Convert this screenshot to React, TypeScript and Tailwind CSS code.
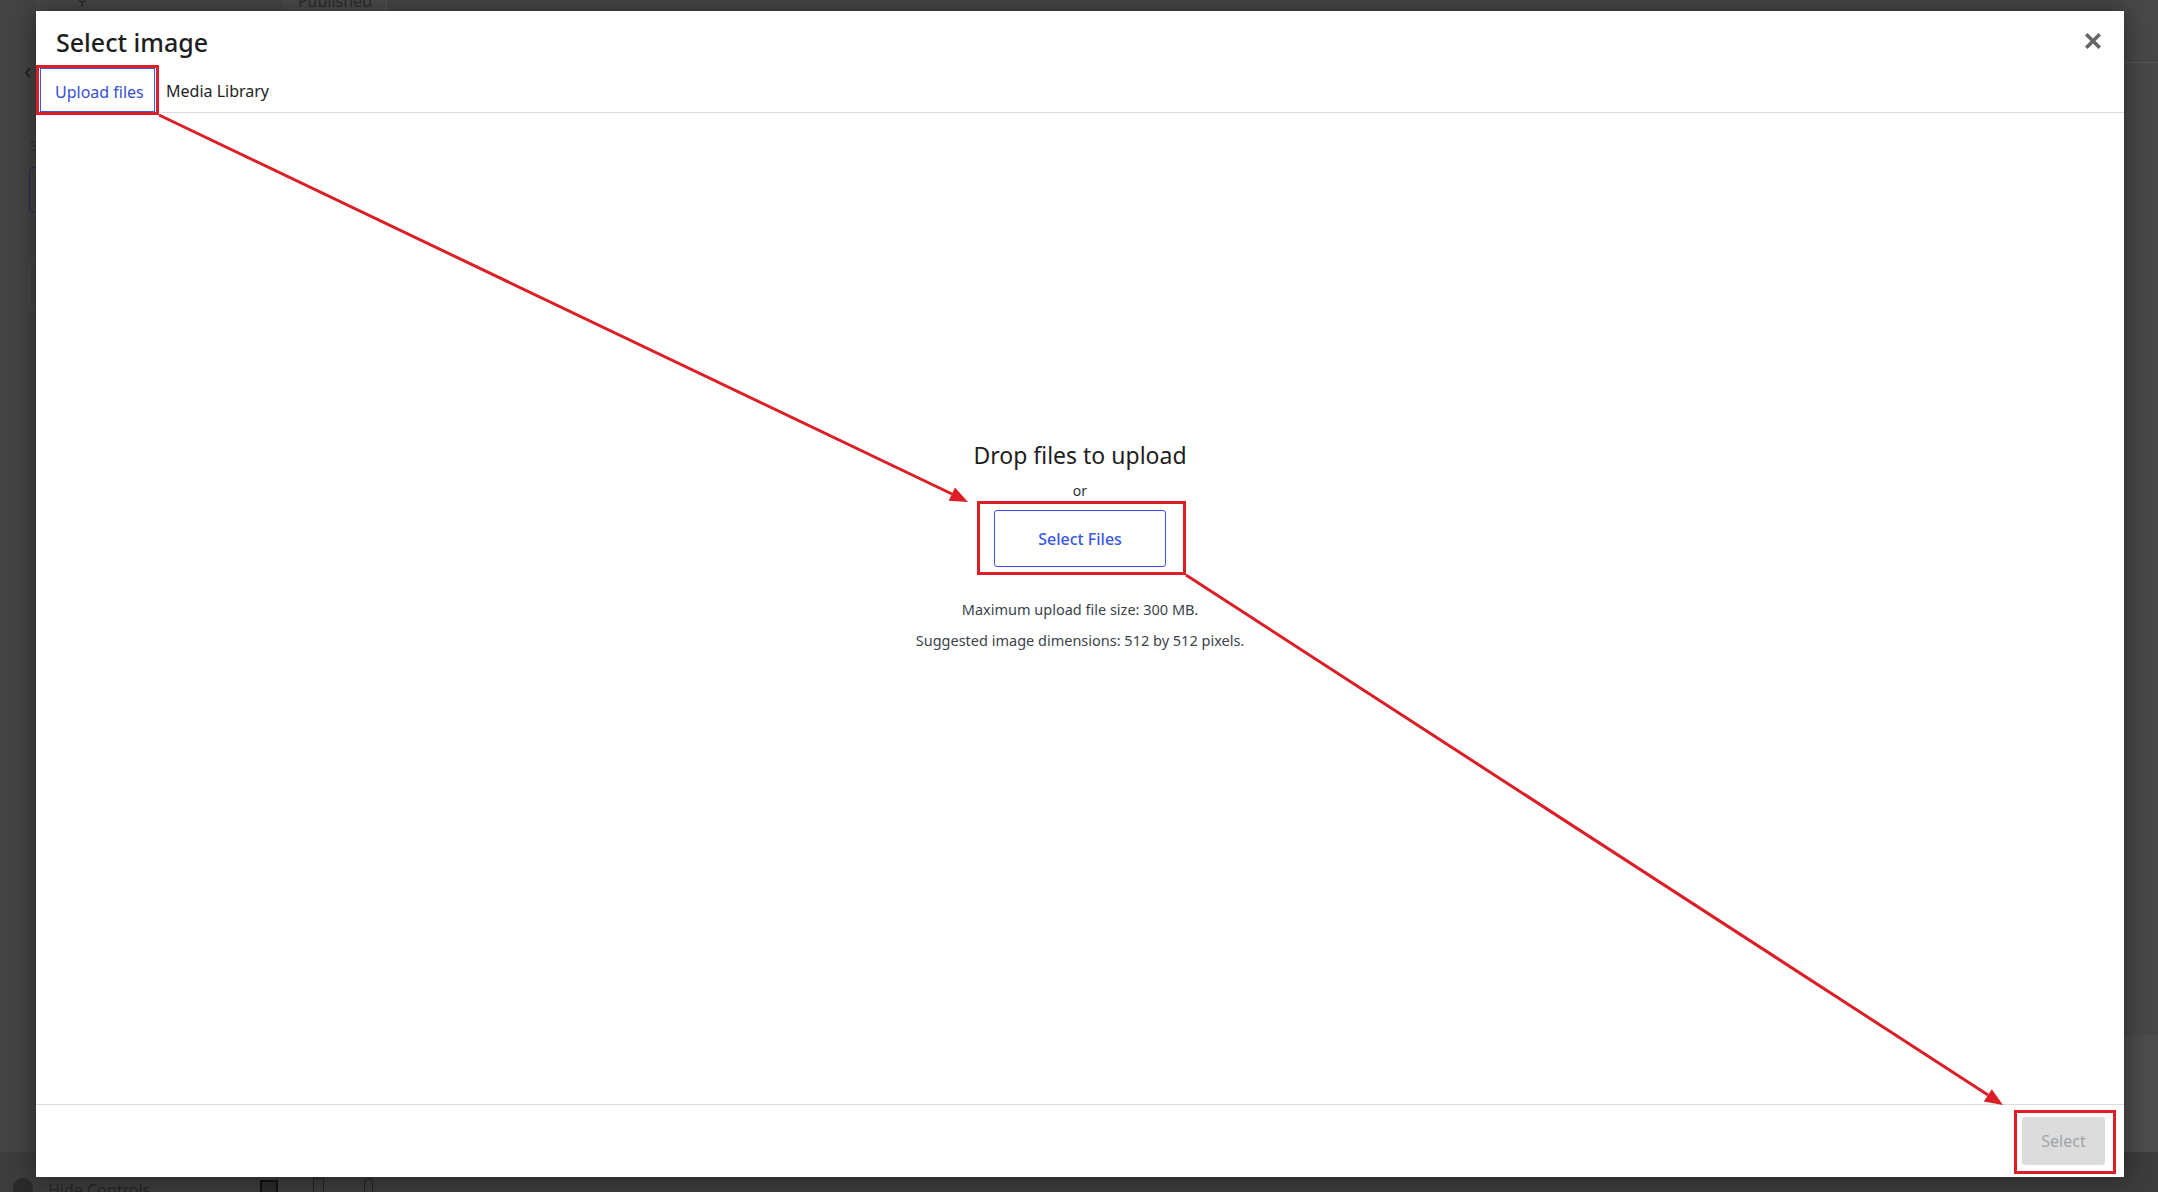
import React from 'react';

const font = "font-['Noto_Sans','Open_Sans',sans-serif]";

function CloseIcon() {
  return (
    <svg width="16" height="16" viewBox="0 0 16 16" className="block">
      <path d="M2.5 2.5 L13.5 13.5 M13.5 2.5 L2.5 13.5" stroke="#666" strokeWidth="3.6" strokeLinecap="square" />
    </svg>
  );
}

// dimmed customizer chrome sitting behind the media modal
function Backdrop() {
  return (
    <div className="absolute inset-0 bg-[#474747]">
      <div className="h-[40px] flex items-start bg-[#484848] text-[#262626] overflow-hidden">
        <span className="ml-[21px] -mt-[10px] text-[20px] leading-[20px] font-bold">×</span>
        <span className="ml-[45px] -mt-[8px] text-[14px] leading-[16px]">⚲</span>
        <div className="ml-[196px] -mt-[9px] w-[104px] h-[40px] bg-[#4c4c4c] border-r border-[#5a5a5a] text-center text-[16px] leading-[20px] text-[#2c2c2c]">Published</div>
      </div>
      <div className="absolute left-0 top-0 w-[36px] h-full bg-[#444]">
        <div className="ml-[24px] mt-[58px] text-[#1d1d1d] text-[24px] leading-[24px]">‹</div>
        <div className="ml-[30px] mt-[52px] text-[#333] text-[15px]">S</div>
        <div className="ml-[29px] mt-[10px] w-[10px] h-[46px] border border-[#2a2a55] rounded-sm" />
        <div className="ml-[29px] mt-[50px] w-[10px] h-[46px] border border-[#4e4e4e] rounded-sm" />
      </div>
      <div className="absolute right-0 top-[62px] w-[34px] h-px bg-[#555]" />
      <div className="absolute right-0 top-[1035px] w-[34px] h-[160px] bg-[#4c4c4c]" />
      <div className="absolute left-0 bottom-0 w-full h-[40px] bg-[#3c3c3c] flex items-end text-[#222] overflow-hidden">
        <div className="ml-[13px] -mb-[6px] w-[20px] h-[20px] rounded-full bg-[#2a2a2a]" />
        <span className="ml-[15px] -mb-[8px] text-[16px] leading-[20px] text-[#262626]">Hide Controls</span>
        <div className="ml-[110px] -mb-[2px] w-[18px] h-[14px] border-2 border-[#111] bg-[#2a2a2a]" />
        <div className="ml-[35px] -mb-[4px] w-[11px] h-[18px] border border-[#222]" />
        <div className="ml-[40px] -mb-[4px] w-[9px] h-[18px] border border-[#222] rounded-sm" />
      </div>
    </div>
  );
}

// red call-outs drawn on top of the dialog
function Annotations() {
  const red = '#dc1f26';
  return (
    <svg className="absolute inset-0 pointer-events-none" width="2158" height="1192" viewBox="0 0 2158 1192">
      <rect x="37.5" y="66.5" width="120" height="47" fill="none" stroke={red} strokeWidth="3" />
      <rect x="978.5" y="502.5" width="206" height="71" fill="none" stroke={red} strokeWidth="3" />
      <rect x="2015.5" y="1111.5" width="99" height="61" fill="none" stroke={red} strokeWidth="3" />
      <line x1="159" y1="115" x2="952" y2="494" stroke={red} strokeWidth="3" />
      <polygon points="968,502 948.6,500.8 955,487.6" fill={red} />
      <line x1="1186" y1="575" x2="1988" y2="1095" stroke={red} strokeWidth="3" />
      <polygon points="2003,1105 1983.8,1101.4 1991.8,1089.2" fill={red} />
    </svg>
  );
}

export default function App() {
  return (
    <div className={`relative w-[2158px] h-[1192px] overflow-hidden ${font}`}>
      <Backdrop />

      <div className="absolute left-[36px] top-[11px] w-[2088px] h-[1166px] bg-white flex flex-col shadow-[0_0_24px_rgba(0,0,0,0.45)]">
        <div className="flex items-start justify-between h-[54px]">
          <h1 className="pl-[20px] pt-[12px] text-[25px] leading-[38px] font-medium text-[#1e1e1e]">Select image</h1>
          <button className="mr-[23px] mt-[22px]">
            <CloseIcon />
          </button>
        </div>

        <div className="flex items-end h-[48px] pl-[4px] border-b border-[#dcdcde]">
          <button className="h-[44px] w-[115px] border border-[#3858e9] text-[16px] leading-[46px] text-[#3450d4] text-left pl-[14px]">Upload files</button>
          <button className="h-[44px] px-[11px] text-[16px] leading-[46px] text-[#1e1e1e]">Media Library</button>
        </div>

        <div className="flex-1 flex flex-col items-center pt-[326px] text-[#1e1e1e]">
          <div className="text-[23px] leading-[32px]">Drop files to upload</div>
          <div className="mt-[10px] text-[14px] leading-[20px] text-[#2c3338]">or</div>
          <button className="mt-[9px] w-[172px] h-[57px] border border-[#3858e9] rounded-[3px] text-[16px] font-medium text-[#3858e9]">Select Files</button>
          <p className="mt-[31px] text-[14.5px] leading-[22px] text-[#3c434a]">Maximum upload file size: 300 MB.</p>
          <p className="mt-[9px] text-[14.5px] leading-[22px] text-[#3c434a]">Suggested image dimensions: 512 by 512 pixels.</p>
        </div>

        <div className="h-[73px] border-t border-[#dcdcde] flex items-center justify-end pr-[19px]">
          <button className="w-[83px] h-[48px] rounded-[3px] bg-[#dcdcdc] text-[16px] text-[#a0a5aa]">Select</button>
        </div>
      </div>

      <Annotations />
    </div>
  );
}
